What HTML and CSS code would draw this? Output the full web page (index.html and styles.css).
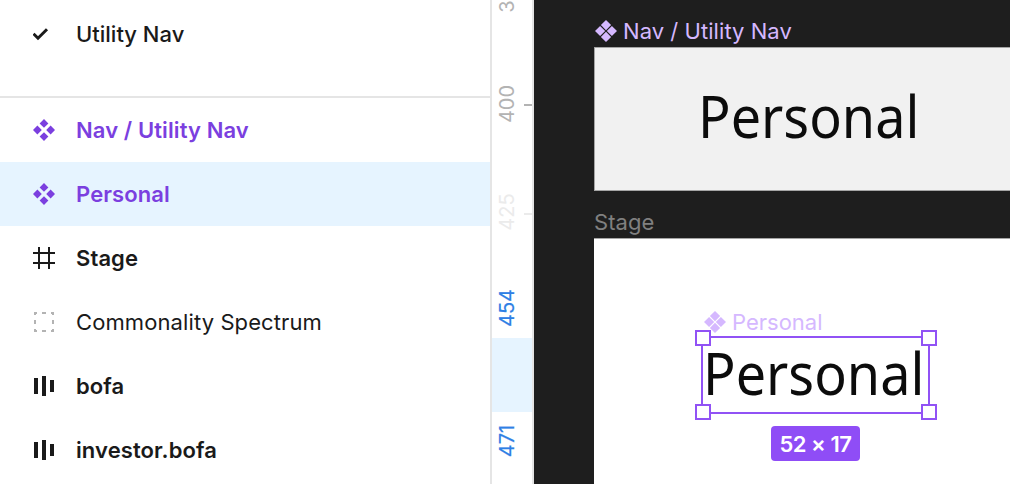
FILE: index.html
```html
<!DOCTYPE html>
<html lang="en">
<head>
<meta charset="utf-8">
<title>Utility Nav</title>
<link rel="stylesheet" href="styles.css">
</head>
<body>
<svg class="defs" aria-hidden="true">
  <symbol id="component" viewBox="0 0 22 22">
    <path d="M11 0l4.400 4.400L11 8.800 6.600 4.400zM4.400 6.600L8.800 11 4.400 15.400 0 11zM17.600 6.600L22 11 17.600 15.400 13.200 11zM11 13.200l4.400 4.400L11 22 6.600 17.600z"/>
  </symbol>
  <symbol id="component-dense" viewBox="0 0 22 22">
    <path d="M11 0l5.100 5.100L11 10.200 5.900 5.100zM5.100 5.900L10.200 11 5.100 16.100 0 11zM16.900 5.900L22 11 16.900 16.100 11.800 11zM11 11.800l5.100 5.100L11 22 5.900 16.900z"/>
  </symbol>
  <symbol id="bars" viewBox="0 0 22 22">
    <path d="M1 3h4v16H1zM9 1h4v20H9zM17 5h4v12h-4z"/>
  </symbol>
</svg>
<div class="editor">
  <aside class="sidebar">
    <div class="pages">
      <div class="row page"><svg class="icon" viewBox="0 0 22 22"><path class="check" d="M.5 10.700l4.500 4.500L14 6.300"/></svg><span>Utility Nav</span></div>
    </div>
    <div class="layers">
      <div class="row component"><svg class="icon"><use href="#component"/></svg><span>Nav / Utility Nav</span></div>
      <div class="row component selected"><svg class="icon"><use href="#component"/></svg><span>Personal</span></div>
      <div class="row strong stage-row"><svg class="icon" viewBox="0 0 22 22"><path d="M5 0h2v22H5zM15 0h2v22h-2zM0 5h22v2H0zM0 15h22v2H0z"/></svg><span>Stage</span></div>
      <div class="row group"><svg class="icon" viewBox="0 0 22 22"><path class="dashes" d="M1 1h3v2H3v1H1zM9 1h4v2H9zM18 1h3v3h-2V3h-1zM1 9h2v4H1zM19 9h2v4h-2zM1 18h2v1h1v2H1zM9 19h4v2H9zM19 18h2v3h-3v-2h1z"/></svg><span>Commonality Spectrum</span></div>
      <div class="row strong bofa-row"><svg class="icon"><use href="#bars"/></svg><span>bofa</span></div>
      <div class="row strong investor-row"><svg class="icon"><use href="#bars"/></svg><span>investor.bofa</span></div>
    </div>
  </aside>
  <div class="ruler">
    <span class="mark m375">375</span>
    <span class="mark m400">400</span><i class="tick t400"></i>
    <span class="mark m425">425</span><i class="tick t425"></i>
    <span class="mark active m454">454</span>
    <div class="range"></div>
    <span class="mark active m471">471</span>
  </div>
  <main class="canvas">
    <div class="label nav-label"><svg class="icon"><use href="#component-dense"/></svg><span>Nav / Utility Nav</span></div>
    <div class="frame nav-frame"><span class="sample">Personal</span></div>
    <div class="label stage-label"><span>Stage</span></div>
    <div class="frame stage-frame"></div>
    <div class="label personal-label"><svg class="icon"><use href="#component-dense"/></svg><span>Personal</span></div>
    <div class="selection">
      <span class="sample">Personal</span>
      <i class="handle nw"></i><i class="handle ne"></i><i class="handle sw"></i><i class="handle se"></i>
    </div>
    <div class="size"><span>52 × 17</span></div>
  </main>
</div>
</body>
</html>
```
FILE: styles.css
```css
* { box-sizing: border-box; }
body { margin: 0; font-family: Inter, "Liberation Sans", sans-serif; font-size: 22px; color: #1a1a1a; }
.defs { position: absolute; width: 0; height: 0; }
.editor { display: flex; width: 1010px; height: 484px; overflow: hidden; background: #fff; }
.sidebar { width: 492px; flex: none; border-right: 2px solid #e5e5e5; }
.pages { height: 98px; padding-top: 2px; border-bottom: 2px solid #e5e5e5; }
.row { display: flex; align-items: center; gap: 21px; height: 64px; padding-left: 33px; white-space: nowrap; letter-spacing: 0.1px; }
.icon { width: 22px; height: 22px; flex: none; fill: currentColor; }
.check { fill: none; stroke: #1a1a1a; stroke-width: 3; }
.dashes { fill: #b3b3b3; }
.page { font-weight: 500; letter-spacing: 0; }
.strong { font-weight: 600; }
.component { font-weight: 600; color: #7b3fdf; }
.selected { background: #e6f4ff; }

.ruler { position: relative; width: 42px; flex: none; border-right: 2px solid #e5e5e5; overflow: hidden; }
.mark { position: absolute; left: 15px; font-size: 20px; line-height: 24px; writing-mode: vertical-rl; transform: translate(-50%, -50%) rotate(180deg); color: #b3b3b3; }
.m375 { top: -5px; }
.m400 { top: 104px; }
.m425 { top: 212px; color: #ebebeb; }
.m454 { top: 307.500px; }
.m471 { top: 440.500px; }
.active { color: #2f80e5; -webkit-text-stroke: 0.2px currentColor; }
.tick { position: absolute; right: 0; width: 8px; height: 2px; background: #b3b3b3; }
.t400 { top: 104px; }
.t425 { top: 212.500px; background: #ebebeb; }
.range { position: absolute; top: 338px; left: 0; width: 100%; height: 74px; background: #e6f4ff; }

.canvas { position: relative; flex: 1; background: #1e1e1e; overflow: hidden; }
.label { position: absolute; display: flex; align-items: center; gap: 6.500px; height: 28px; line-height: 28px; white-space: nowrap; color: #d5b8ff; letter-spacing: 0.05px; }
.nav-label { left: 60.500px; top: 17px; }
.stage-label { left: 60px; top: 208px; color: #808080; }
.personal-label { left: 169.500px; top: 308px; letter-spacing: 0; }
.frame { position: absolute; left: 60px; right: 0; }
.nav-frame { top: 47px; height: 144px; padding: 33px 0 0 103px; background: #f1f1f1; border: 1px solid #a5a5a5; border-right: 0; }
.stage-frame { top: 238px; bottom: 0; background: #fff; border-top: 1px solid #a5a5a5; }
.sample { display: block; font-family: "Noto Sans", sans-serif; font-size: 58px; line-height: 70px; color: #0c0c0c; white-space: nowrap; transform: scaleX(0.93); transform-origin: 0 0; }
.selection { position: absolute; left: 167px; top: 336px; width: 229px; height: 78px; border: 2px solid #9152f5; }
.selection .sample { margin-left: -0.500px; }
.handle { position: absolute; width: 16px; height: 16px; background: #fff; border: 2px solid #9152f5; }
.nw { left: -8.500px; top: -8px; }
.ne { right: -9px; top: -8px; }
.sw { left: -8.500px; bottom: -8px; }
.se { right: -9px; bottom: -8px; }
.size { position: absolute; left: 237px; top: 426px; width: 89px; height: 35px; display: flex; align-items: center; justify-content: center; border-radius: 4px; background: #8f4df6; color: #fff; font-weight: 600; letter-spacing: -0.500px; white-space: nowrap; }
```
